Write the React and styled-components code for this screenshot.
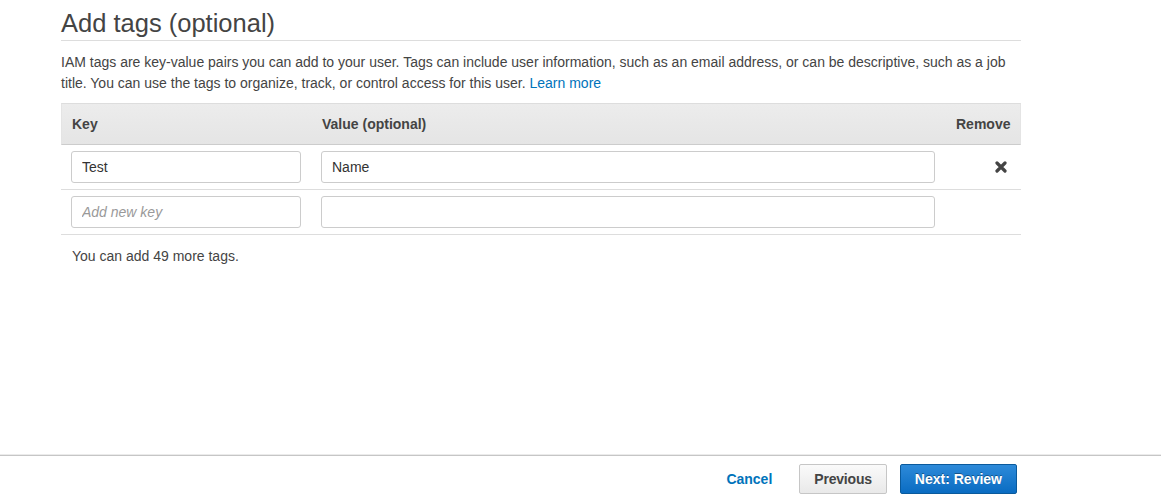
import React from 'react';
import styled, {createGlobalStyle} from 'styled-components';

const GlobalStyle = createGlobalStyle`
body {
    margin: 0;
    font-family: "Liberation Sans", Arial, sans-serif;
    color: #444;
    background: #fff;
}
`

const Page = styled.div`
display: flex;
flex-direction: column;
height: 100vh;
`
const Main = styled.main`
flex: 1;
padding-left: 61px;
width: 960px;
`
const Title = styled.h2`
margin: 0;
padding: 8px 0 2px;
font-size: 25.5px;
line-height: 30px;
font-weight: 400;
color: #444;
border-bottom: 1px solid #ddd;
`
const Intro = styled.p`
margin: 11px 0 9px;
font-size: 14px;
line-height: 21px;
color: #444;
`
const Link = styled.a`
color: #0073bb;
text-decoration: none;
`
const Table = styled.div`
display: flex;
flex-direction: column;
`
const Row = styled.div`
display: grid;
grid-template-columns: 230px 614px 1fr;
column-gap: 20px;
align-items: center;
padding: ${p => p.$header ? '0' : '6px'} 0 ${p => p.$header ? '0' : '6px'} 10px;
height: ${p => p.$header ? '40px' : 'auto'};
border-bottom: 1px solid ${p => p.$header ? '#ccc' : '#ddd'};
border-top: ${p => p.$header ? '1px solid #ddd' : 'none'};
border-left: ${p => p.$header ? '1px solid #e4e4e4' : 'none'};
border-right: ${p => p.$header ? '1px solid #e4e4e4' : 'none'};
background: ${p => p.$header ? 'linear-gradient(#ececec, #e5e5e5)' : 'transparent'};
`
const HeadCell = styled.div`
font-size: 14px;
font-weight: 700;
color: #444;
text-align: ${p => p.$right ? 'right' : 'left'};
padding-right: ${p => p.$right ? '10px' : '0'};
`
const Input = styled.input`
box-sizing: border-box;
width: 100%;
height: 32px;
border: 1px solid #ccc;
border-radius: 3px;
padding: 0 10px;
font-family: inherit;
font-size: 14px;
color: #333;
background: #fff;
outline: none;
&::placeholder {
    color: #999;
    font-style: italic;
}
`
const RemoveCell = styled.div`
display: flex;
justify-content: flex-end;
padding-right: 14px;
`
const RemoveButton = styled.button`
border: 0;
background: none;
padding: 0;
cursor: pointer;
display: flex;
`
const Note = styled.p`
margin: 12px 0 0 11px;
font-size: 14px;
line-height: 18px;
color: #444;
`
const Footer = styled.footer`
display: flex;
justify-content: flex-end;
align-items: center;
border-top: 1px solid #c6c6c6;
box-shadow: 0 -1px 0 #ebebeb;
padding: 8px 144px 4px 0;
`
const Cancel = styled.a`
font-size: 14px;
font-weight: 700;
color: #0073bb;
margin-right: 27px;
cursor: pointer;
`
const Button = styled.button`
height: 30px;
padding: 0 14px;
margin-left: ${p => p.$primary ? '13px' : '0'};
border-radius: 2px;
font-family: inherit;
font-size: 14px;
font-weight: 700;
letter-spacing: ${p => p.$primary ? '0' : '-0.2px'};
cursor: pointer;
border: 1px solid ${p => p.$primary ? '#0a5a9c' : '#c6c6c6'};
color: ${p => p.$primary ? '#fff' : '#444'};
background: ${p => p.$primary ? 'linear-gradient(#2d8ad9, #0a6cc2)' : 'linear-gradient(#fafafa, #e9e9e9)'};
text-shadow: ${p => p.$primary ? '0 -1px 0 rgba(0,0,0,0.35)' : 'none'};
`

function CloseIcon() {
    return (
        <svg width="12" height="12" viewBox="0 0 12 12">
            <path d="M2 2 L10 10 M10 2 L2 10" stroke="#444" strokeWidth="3.2" strokeLinecap="round"/>
        </svg>
    )
}

function App() {
    return (
        <Page>
            <GlobalStyle/>
            <Main>
                <Title>Add tags (optional)</Title>
                <Intro>
                    IAM tags are key-value pairs you can add to your user. Tags can include user information, such as an email address, or can be descriptive, such as a job title. You can use the tags to organize, track, or control access for this user. <Link href="#">Learn more</Link>
                </Intro>
                <Table>
                    <Row $header>
                        <HeadCell>Key</HeadCell>
                        <HeadCell>Value (optional)</HeadCell>
                        <HeadCell $right>Remove</HeadCell>
                    </Row>
                    <Row>
                        <Input defaultValue="Test"/>
                        <Input defaultValue="Name"/>
                        <RemoveCell>
                            <RemoveButton aria-label="Remove"><CloseIcon/></RemoveButton>
                        </RemoveCell>
                    </Row>
                    <Row>
                        <Input placeholder="Add new key"/>
                        <Input/>
                        <div/>
                    </Row>
                </Table>
                <Note>You can add 49 more tags.</Note>
            </Main>
            <Footer>
                <Cancel>Cancel</Cancel>
                <Button>Previous</Button>
                <Button $primary>Next: Review</Button>
            </Footer>
        </Page>
    );
}

export default App;
